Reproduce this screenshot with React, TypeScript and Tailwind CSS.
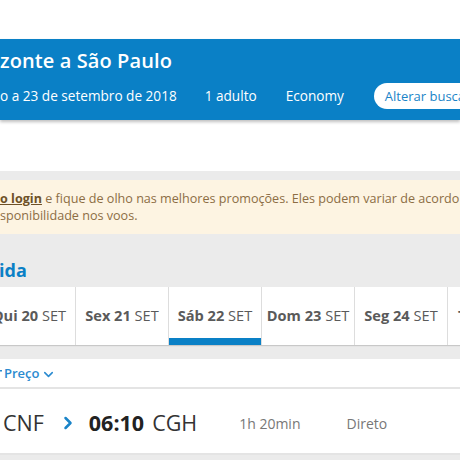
import { ChevronDown, ChevronRight } from "lucide-react";

const tabs = [
  { day: "Qui 20", mon: "SET" },
  { day: "Sex 21", mon: "SET" },
  { day: "Sáb 22", mon: "SET", active: true },
  { day: "Dom 23", mon: "SET" },
  { day: "Seg 24", mon: "SET" },
  { day: "Ter 25", mon: "SET" },
];

const App = () => {
  return (
    <div className="h-[460px] w-[460px] overflow-hidden bg-white font-['Open_Sans',sans-serif]">
      {/* search summary */}
      <header className="mt-[39px] h-[81px] bg-[#0a80c6] text-white shadow-[0_2px_3px_rgba(0,0,0,0.25)]">
        <h1 className="pt-[8px] text-[20px] font-semibold leading-[28px] tracking-[0.1px]">zonte a São Paulo</h1>
        <div className="mt-[8px] flex items-center whitespace-nowrap text-[13.6px] leading-[26px]">
          <span>o a 23 de setembro de 2018</span>
          <span className="ml-[28px]">1 adulto</span>
          <span className="ml-[29px]">Economy</span>
          <button className="ml-[30px] h-[26px] shrink-0 rounded-full bg-white px-[11px] text-[13px] text-[#1a84c8]">
            Alterar busca
          </button>
        </div>
      </header>

      <div className="h-[51px]" />

      <main className="bg-[#ebebeb] pt-[9px]">
        <div className="h-[54px] bg-[#fdf4e2] pt-[10px] text-[12.6px] leading-[17px] text-[#8c6d44]">
          <p className="whitespace-nowrap">
            <span className="font-bold text-[#6e5127] underline">o login</span> e fique de olho nas melhores promoções.
            Eles podem variar de acordo com
          </p>
          <p>sponibilidade nos voos.</p>
        </div>

        <h2 className="-ml-[1px] pt-[25px] pb-[6px] text-[18px] font-bold leading-[22px] text-[#0a80c6]">ida</h2>

        <nav className="-ml-[17px] flex h-[58px] bg-white shadow-[0_1px_1px_rgba(0,0,0,0.15)]">
          {tabs.map((t) => (
            <div
              key={t.day}
              className="relative flex w-[93px] shrink-0 items-center justify-center whitespace-nowrap border-r border-[#dddddd] text-[14.6px] text-[#5a5a5a]"
            >
              <span>
                <b>{t.day}</b> {t.mon}
              </span>
              {t.active && <span className="absolute inset-x-0 bottom-0 h-[7px] bg-[#0a80c6]" />}
            </div>
          ))}
        </nav>

        <div className="mt-[14px] bg-white">
          <div className="flex h-[30px] items-center border-b-2 border-[#e4e4e4] pt-[2px] text-[13px] font-semibold text-[#2b8bd0]">
            <svg className="-ml-[8px] h-[10px] w-[10px]" viewBox="0 0 10 10" fill="#2b8bd0">
              <rect x="0" y="1" width="10" height="1.5" />
              <rect x="0" y="4.5" width="8" height="1.5" />
              <rect x="0" y="8" width="6" height="1.5" />
            </svg>
            <span className="ml-[2px]">Preço</span>
            <ChevronDown className="ml-[2px] h-[15px] w-[15px]" strokeWidth={2.5} />
          </div>

          <div className="flex h-[66px] items-center whitespace-nowrap border-b-2 border-[#e4e4e4] pt-[4px] text-[21.5px] text-[#333333]">
            <span className="ml-[3px]">CNF</span>
            <ChevronRight className="ml-[14px] h-[20px] w-[20px] text-[#1a84c8]" strokeWidth={3} />
            <span className="ml-[11px] font-bold text-[#222222]">06:10</span>
            <span className="ml-[8px]">CGH</span>
            <span className="ml-[42px] text-[14px] text-[#777777]">1h 20min</span>
            <span className="ml-[46px] text-[14px] text-[#777777]">Direto</span>
          </div>
        </div>
        <div className="h-[10px]" />
      </main>
    </div>
  );
};

export default App;
